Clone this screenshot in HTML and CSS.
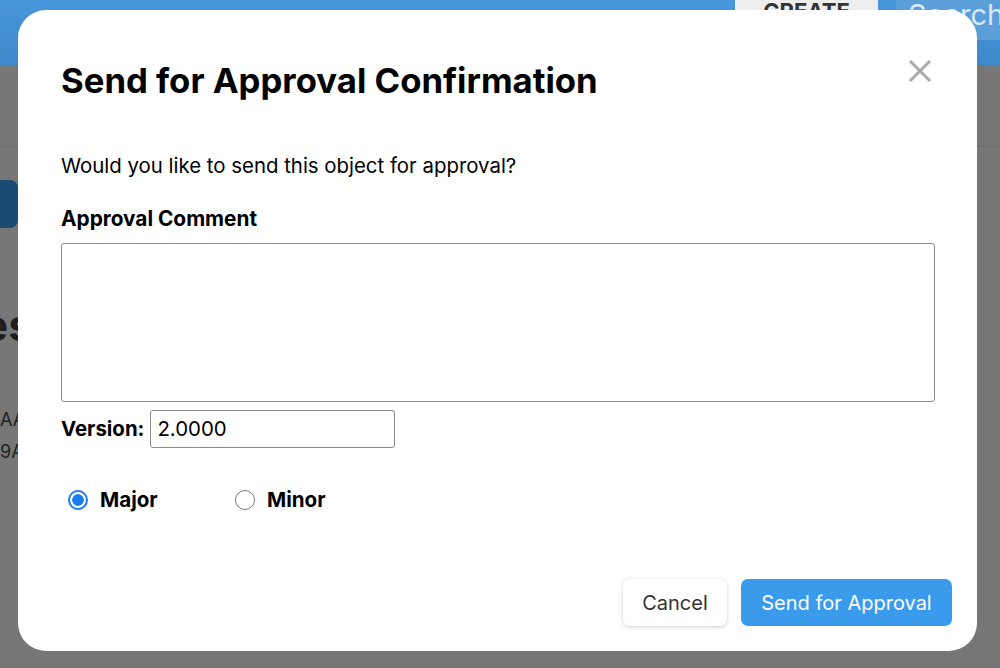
FILE: index.html
```html
<!DOCTYPE html>
<html>
<head>
<meta charset="utf-8">
<link rel="stylesheet" href="styles.css">
</head>
<body>
<div class="page">
  <header class="topbar">
    <div class="spacer"></div>
    <div class="create">CREATE</div>
    <div class="search">Search...</div>
  </header>
  <div class="subbar"></div>
  <div class="content">
    <div class="btn-dark"></div>
    <div class="big">es</div>
    <div class="small">AA<br>9A</div>
  </div>
</div>

<div class="modal">
  <div class="modal-head">
    <h1 class="title">Send for Approval Confirmation</h1>
    <svg class="close" width="26" height="26" viewBox="0 0 26 26"><path d="M3 3 L23 23 M23 3 L3 23" stroke="#a9a9a9" stroke-width="3" stroke-linecap="butt"/></svg>
  </div>
  <p class="question">Would you like to send this object for approval?</p>
  <label class="label">Approval Comment</label>
  <div class="textarea"></div>
  <div class="version-row">
    <span class="label">Version:</span>
    <div class="input">2.0000</div>
  </div>
  <div class="radios">
    <div class="radio-item"><span class="radio checked"></span><span class="radio-label">Major</span></div>
    <div class="radio-item"><span class="radio"></span><span class="radio-label">Minor</span></div>
  </div>
  <div class="footer">
    <button class="btn cancel">Cancel</button>
    <button class="btn primary">Send for Approval</button>
  </div>
</div>
</body>
</html>
```
FILE: styles.css
```css
* { box-sizing: border-box; }
html, body { margin: 0; padding: 0; }
body {
  width: 1000px;
  height: 668px;
  overflow: hidden;
  background: #767676;
  font-family: "Inter", "Liberation Sans", sans-serif;
  position: relative;
}
.page { width: 100%; height: 100%; }
.topbar {
  height: 65px;
  background: linear-gradient(#4896da, #3f88cc);
  display: flex;
  align-items: flex-start;
}
.spacer { flex: 0 0 735px; }
.create {
  flex: 0 0 143px;
  height: 40px;
  background: #eeeeee;
  color: #333;
  font-weight: 700;
  font-size: 22px;
  text-align: center;
  margin-top: -18px;
  padding-top: 19px;
  line-height: 20px;
}
.search {
  margin-left: 18px;
  flex: 1;
  height: 40px;
  background: #5b9fd9;
  color: #dbe9f6;
  font-size: 29px;
  line-height: 30px;
  padding-left: 12px;
  white-space: nowrap;
  overflow: hidden;
}
.subbar {
  height: 82px;
  border-bottom: 1px solid #6c6c6c;
}
.content { padding-top: 33px; }
.btn-dark {
  width: 30px;
  height: 48px;
  margin-left: -12px;
  background: #1b4a72;
  border-radius: 8px;
}
.big {
  margin-top: 70px;
  margin-left: -18px;
  font-size: 44px;
  font-weight: 700;
  color: #1e1e1e;
}
.small {
  margin-top: 52px;
  margin-left: 0;
  font-size: 18px;
  line-height: 32px;
  color: #222;
}

.modal {
  position: absolute;
  left: 18px;
  top: 10px;
  width: 959px;
  height: 641px;
  background: #fff;
  border-radius: 28px;
  padding: 50px 42px 0 43px;
  color: #000;
}
.modal-head {
  display: flex;
  justify-content: space-between;
  align-items: flex-start;
}
.title {
  margin: 0;
  font-size: 34.7px;
  font-weight: 700;
  line-height: 40px;
  letter-spacing: 0;
}
.close { margin-top: -2px; margin-right: 2px; }
.question {
  margin: 53px 0 0;
  font-size: 20.4px;
  line-height: 26px;
}
.label {
  display: block;
  font-size: 20.8px;
  font-weight: 700;
  margin-top: 27px;
  line-height: 26px;
}
.textarea {
  margin-top: 11px;
  height: 159px;
  border: 1px solid #8a8a8a;
  border-radius: 3px;
}
.version-row {
  display: flex;
  align-items: center;
  gap: 6px;
  margin-top: 8px;
}
.version-row .label { margin-top: 0; display: inline; font-size: 20.4px; }
.input {
  width: 245px;
  height: 38px;
  border: 1px solid #8a8a8a;
  border-radius: 3px;
  font-size: 20.4px;
  line-height: 36px;
  padding-left: 6px;
}
.radios {
  display: flex;
  margin-top: 39px;
  padding-left: 7px;
}
.radio-item {
  display: flex;
  align-items: center;
  width: 167px;
}
.radio {
  width: 20px;
  height: 20px;
  border-radius: 50%;
  border: 1.5px solid #7a7a7a;
  margin-right: 12px;
}
.radio.checked {
  border: 2px solid #1a7cf2;
  background: radial-gradient(circle, #1a7cf2 0 5.5px, #fff 6px);
}
.radio-label {
  font-size: 20.6px;
  font-weight: 700;
}
.footer {
  display: flex;
  justify-content: flex-end;
  gap: 14px;
  margin-top: 67px;
  margin-right: -17px;
}
.btn {
  height: 47px;
  border-radius: 7px;
  font-family: inherit;
  font-size: 20px;
  border: none;
  padding: 0 12px;
}
.cancel {
  background: #fff;
  color: #333;
  box-shadow: 0 1px 4px rgba(0,0,0,0.18);
  width: 104px;
}
.primary {
  background: #3a9bec;
  color: #fff;
  width: 211px;
}
```
